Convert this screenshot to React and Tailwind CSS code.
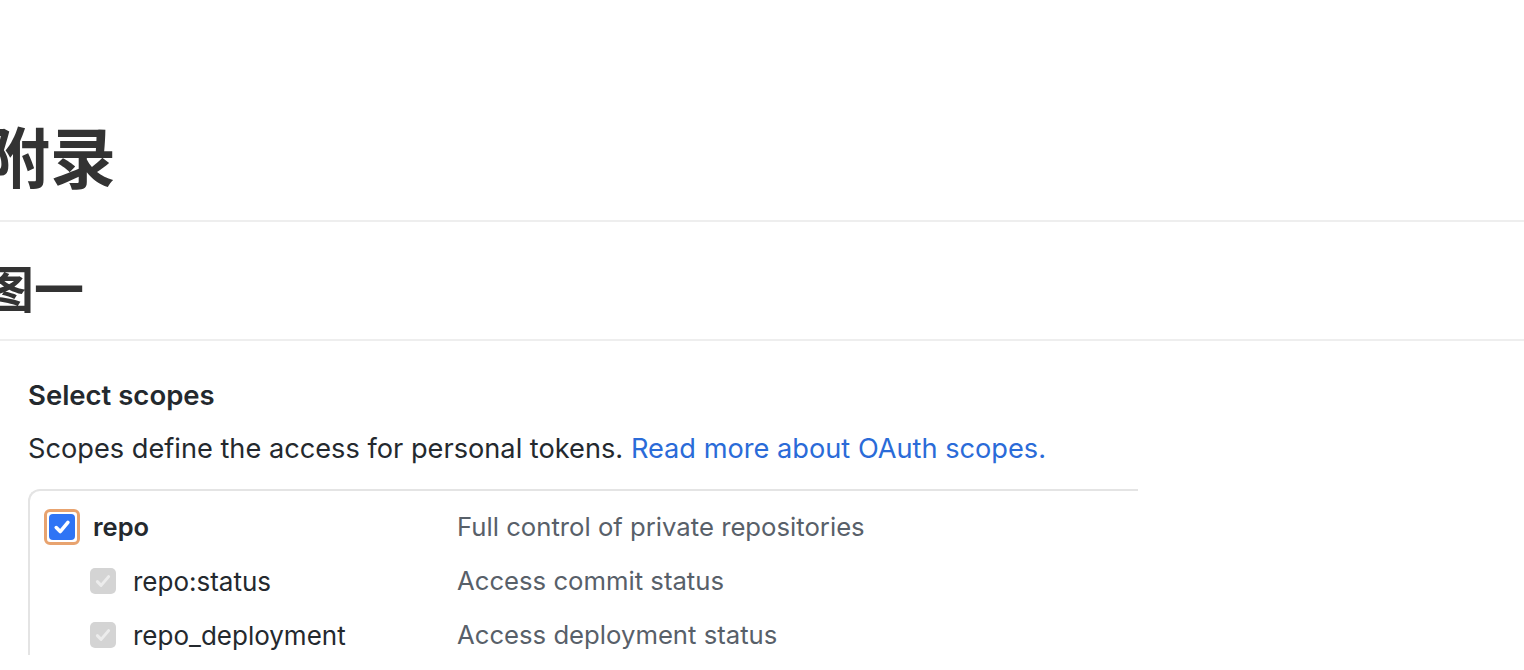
const cjk = { fontFamily: '"Noto Sans CJK SC", "Noto Sans", sans-serif' };

function Check({ disabled }) {
  if (disabled) {
    return (
      <span className="flex h-[26px] w-[26px] items-center justify-center rounded-[5px] bg-[#d4d4d4]">
        <svg width="20" height="20" viewBox="0 0 16 16">
          <path d="M3.5 8.5l3 3 6-7" fill="none" stroke="#ececec" strokeWidth="2.4" strokeLinecap="round" strokeLinejoin="round" />
        </svg>
      </span>
    );
  }
  return (
    <span className="flex h-[36px] w-[36px] items-center justify-center rounded-[6px] border-[3px] border-[#e8a36f]">
      <span className="flex h-[26px] w-[26px] items-center justify-center rounded-[4px] bg-[#2f74f5]">
        <svg width="22" height="22" viewBox="0 0 16 16">
          <path d="M3.8 8.4l2.9 2.9 5.6-6.6" fill="none" stroke="#fff" strokeWidth="2.6" strokeLinecap="round" strokeLinejoin="round" />
        </svg>
      </span>
    </span>
  );
}

const scopes = [
  { name: "repo:status", desc: "Access commit status" },
  { name: "repo_deployment", desc: "Access deployment status" },
];

export default function App() {
  return (
    <div className="h-[670px] w-[1524px] overflow-hidden bg-white text-[#333]">
      <div className="-ml-[16px] pt-[104px]">
        <h1 className="border-b-2 border-[#eeeeee] pb-[16px] text-[66px] font-bold leading-[100px]" style={cjk}>
          附录
        </h1>
        <h2 className="border-b-2 border-[#eeeeee] pt-[25px] pb-[14px] text-[50px] font-bold leading-[78px]" style={cjk}>
          图一
        </h2>
      </div>

      <div
        className="w-[1138px] pl-[28px] pt-[34px] text-[#24292e]"
        style={{ fontFamily: '"Inter", "Noto Sans", sans-serif' }}
      >
        <div className="text-[27.5px] font-semibold leading-[40px]">Select scopes</div>
        <p className="mt-[14px] text-[27.2px] leading-[40px]">
          Scopes define the access for personal tokens.{" "}
          <span className="text-[#2a6bd8]">Read more about OAuth scopes.</span>
        </p>
        <div className="mt-[20px] rounded-tl-[12px] border-l-2 border-t-2 border-[#e4e4e4] pl-[14px] pt-[16px]">
          <div className="flex h-[40px] items-center">
            <Check />
            <span className="ml-[13px] w-[364px] text-[25.5px] font-semibold">repo</span>
            <span className="text-[25.7px] text-[#586069]">Full control of private repositories</span>
          </div>
          {scopes.map((s) => (
            <div key={s.name} className="mt-[14px] flex h-[40px] items-center pl-[46px]">
              <Check disabled />
              <span className="ml-[17px] w-[324px] text-[26px]">{s.name}</span>
              <span className="text-[25.7px] text-[#586069]">{s.desc}</span>
            </div>
          ))}
        </div>
      </div>
    </div>
  );
}
